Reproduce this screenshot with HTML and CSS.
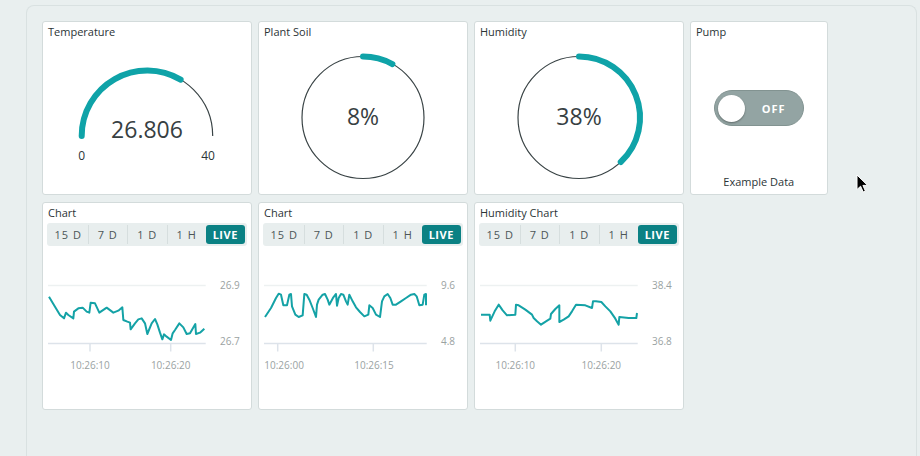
FILE: index.html
```html
<!DOCTYPE html>
<html>
<head>
<meta charset="utf-8">
<link rel="stylesheet" href="styles.css">
</head>
<body>
<div class="board">
  <div class="grid">
    <div class="card">
      <div class="title">Temperature</div>
      <svg class="widget" width="207" height="152" viewBox="0 0 207 152">
        <path class="ring" d="M38.7 95 A65.5 65.5 0 0 1 169.7 95"/>
        <path class="fillarc" d="M38.7 95 A65.5 65.5 0 0 1 137.6 38.6"/>
        <text class="gauge-value" x="104" y="96.5" text-anchor="middle">26.806</text>
        <text class="gauge-tick" x="38.8" y="119" text-anchor="middle">0</text>
        <text class="gauge-tick" x="165" y="119" text-anchor="middle">40</text>
      </svg>
    </div>
    <div class="card">
      <div class="title">Plant Soil</div>
      <svg class="widget" width="207" height="152" viewBox="0 0 207 152">
        <circle class="ring" cx="104" cy="76.5" r="61"/>
        <path class="fillarc" d="M104 15.5 A61 61 0 0 1 133.4 23.05"/>
        <text class="gauge-value" x="104" y="83.5" text-anchor="middle">8%</text>
      </svg>
    </div>
    <div class="card">
      <div class="title">Humidity</div>
      <svg class="widget" width="207" height="152" viewBox="0 0 207 152">
        <circle class="ring" cx="104" cy="76.5" r="61"/>
        <path class="fillarc" d="M104 15.5 A61 61 0 0 1 145.76 120.97"/>
        <text class="gauge-value" x="104" y="83.5" text-anchor="middle">38%</text>
      </svg>
    </div>
    <div class="card pump">
      <div class="title">Pump</div>
      <div class="pump-body">
        <div class="switch"><span class="knob"></span><span class="switch-label">OFF</span></div>
      </div>
      <div class="pump-foot">Example Data</div>
    </div>

    <div class="card">
      <div class="title">Chart</div>
      <div class="ranges">
        <span class="range">15 D</span><span class="range">7 D</span><span class="range">1 D</span><span class="range last">1 H</span><span class="range live">LIVE</span>
      </div>
      <svg class="plot" width="207" height="163" viewBox="0 0 207 163">
        <line class="grid-top" x1="5" y1="39.5" x2="162.7" y2="39.5"/>
        <line class="grid-bottom" x1="5" y1="97.5" x2="162.7" y2="97.5"/>
        <line class="tick" x1="47" y1="97.5" x2="47" y2="105.5"/>
        <line class="tick" x1="127.7" y1="97.5" x2="127.7" y2="105.5"/>
        <g transform="translate(-3 24) scale(0.33333)">
          <polyline class="series" points="27,80 45,110 60,135 72,145 78,128 85,135 100,145 102,125 115,115 128,113 140,125 148,128 152,98 165,100 178,128 200,113 220,128 235,122 247,112 250,150 262,155 270,158 272,178 285,160 295,148 305,145 315,160 322,192 335,160 345,147 352,163 360,188 367,208 372,193 380,200 393,210 398,190 405,180 418,160 430,172 440,192 450,190 466,162 468,192 480,188 493,176"/>
        </g>
        <text class="axis" x="177" y="43">26.9</text>
        <text class="axis" x="177" y="99">26.7</text>
        <text class="axis" x="47" y="123.3" text-anchor="middle">10:26:10</text>
        <text class="axis" x="127.7" y="123.3" text-anchor="middle">10:26:20</text>
      </svg>
    </div>
    <div class="card">
      <div class="title">Chart</div>
      <div class="ranges">
        <span class="range">15 D</span><span class="range">7 D</span><span class="range">1 D</span><span class="range last">1 H</span><span class="range live">LIVE</span>
      </div>
      <svg class="plot" width="207" height="163" viewBox="0 0 207 163">
        <line class="grid-top" x1="5" y1="39.5" x2="167.7" y2="39.5"/>
        <line class="grid-bottom" x1="5" y1="97.5" x2="167.7" y2="97.5"/>
        <line class="tick" x1="18.7" y1="97.5" x2="18.7" y2="105.5"/>
        <line class="tick" x1="114.3" y1="97.5" x2="114.3" y2="105.5"/>
        <g transform="translate(-3 -48) scale(0.33333)">
          <polyline class="series" points="27,357 45,330 60,300 68,287 75,290 82,322 93,322 100,290 105,288 108,325 118,350 128,357 140,352 145,288 152,290 160,305 170,330 180,357 183,320 188,305 200,290 207,288 215,305 220,320 232,298 240,288 243,323 248,300 255,288 262,290 270,310 275,320 280,290 290,310 300,328 312,342 325,355 337,350 340,322 350,330 360,350 372,357 378,310 385,295 395,288 403,300 410,320 420,320 435,310 450,300 465,290 475,288 482,295 490,322 500,320 505,290 510,288 510,322"/>
        </g>
        <text class="axis" x="182" y="43">9.6</text>
        <text class="axis" x="182" y="99">4.8</text>
        <text class="axis" x="5.3" y="123.3">10:26:00</text>
        <text class="axis" x="115" y="123.3" text-anchor="middle">10:26:15</text>
      </svg>
    </div>
    <div class="card">
      <div class="title">Humidity Chart</div>
      <div class="ranges">
        <span class="range">15 D</span><span class="range">7 D</span><span class="range">1 D</span><span class="range last">1 H</span><span class="range live">LIVE</span>
      </div>
      <svg class="plot" width="207" height="163" viewBox="0 0 207 163">
        <line class="grid-top" x1="5" y1="39.5" x2="162.7" y2="39.5"/>
        <line class="grid-bottom" x1="5" y1="97.5" x2="162.7" y2="97.5"/>
        <line class="tick" x1="40.3" y1="97.5" x2="40.3" y2="105.5"/>
        <line class="tick" x1="126.3" y1="97.5" x2="126.3" y2="105.5"/>
        <g transform="translate(-3 -48) scale(0.33333)">
          <polyline class="series" points="27,350 53,350 55,368 68,340 80,320 92,337 105,352 130,350 132,320 140,322 160,335 180,350 185,360 195,370 207,380 222,370 235,362 237,348 250,333 262,322 262,372 275,365 290,355 300,340 312,320 340,322 360,330 363,310 372,310 388,312 400,325 415,340 430,362 440,380 442,357 470,360 493,360 495,345"/>
        </g>
        <text class="axis" x="177" y="43">38.4</text>
        <text class="axis" x="177" y="99">36.8</text>
        <text class="axis" x="40.3" y="123.3" text-anchor="middle">10:26:10</text>
        <text class="axis" x="126.3" y="123.3" text-anchor="middle">10:26:20</text>
      </svg>
    </div>
  </div>
</div>
<svg class="cursor" width="14" height="20" viewBox="0 0 14 20">
  <path d="M1 1 L1 15.5 L4.6 12.2 L7.2 18 L9.4 17 L6.9 11.4 L11.6 11.4 Z" fill="#000" stroke="#fff" stroke-width="1" stroke-linejoin="round"/>
</svg>
</body>
</html>
```

FILE: styles.css
```css
html, body {
  margin: 0;
  background: #e9efef;
  font-family: "Open Sans", "Noto Sans", sans-serif;
}

body {
  position: relative;
  box-sizing: border-box;
  height: 456px;
  overflow: hidden;
  padding: 5px 3px 0 26px;
}

.board {
  border: 1px solid #d9e1e1;
  border-bottom: 0;
  border-radius: 8px 8px 0 0;
  padding: 15px;
  height: 420px;
}

.grid {
  display: grid;
  grid-template-columns: 209.5px 209.5px 209.5px 137.5px;
  grid-template-rows: 174px 208px;
  column-gap: 6.5px;
  row-gap: 7px;
}

.card {
  background: #fff;
  border: 1px solid #d3dbdb;
  border-radius: 3px;
  box-sizing: border-box;
  display: flex;
  flex-direction: column;
  overflow: hidden;
}

.title {
  font-size: 11px;
  line-height: 16px;
  height: 18px;
  box-sizing: border-box;
  padding: 2px 5px 0;
  color: #2b3436;
  white-space: nowrap;
}

.widget, .plot {
  display: block;
}

.widget {
  margin-top: 1px;
}

.ring {
  fill: none;
  stroke: #3a4446;
  stroke-width: 1.2;
}

.fillarc {
  fill: none;
  stroke: #0fa3a8;
  stroke-width: 6;
  stroke-linecap: round;
}

.gauge-value {
  font-size: 23px;
  fill: #374042;
}

.gauge-tick {
  font-size: 12px;
  fill: #2b3436;
}

/* pump */
.pump-body {
  flex: 1;
  display: flex;
  align-items: center;
  justify-content: center;
  padding-top: 2px;
}

.switch {
  width: 90px;
  height: 36px;
  box-sizing: border-box;
  border-radius: 18px;
  background: #93a4a3;
  border: 1px solid #829391;
  display: flex;
  align-items: center;
  padding-left: 3px;
}

.knob {
  width: 27px;
  height: 27px;
  border-radius: 50%;
  background: #fff;
  box-shadow: 0 1px 2px rgba(0, 0, 0, 0.35);
}

.switch-label {
  margin-left: 17px;
  color: #fff;
  font-size: 11px;
  font-weight: 700;
  letter-spacing: 1px;
}

.pump-foot {
  text-align: center;
  font-size: 11px;
  line-height: 16px;
  padding-bottom: 4px;
  color: #2b3436;
}

/* charts */
.ranges {
  display: flex;
  margin: 2px 4px 0;
  height: 23px;
  box-sizing: border-box;
  padding: 2px;
  background: #e8eeee;
  border-radius: 3px;
}

.range {
  flex: 1;
  text-align: center;
  font-size: 11px;
  line-height: 19px;
  letter-spacing: 1px;
  color: #4c5657;
  border-right: 1px solid #d6dede;
}

.range.last {
  border-right: 0;
}

.range.live {
  border-right: 0;
  background: #0b8184;
  color: #fff;
  font-weight: 700;
  border-radius: 3px;
  letter-spacing: 0.5px;
}

.grid-top {
  stroke: #edf1f1;
  stroke-width: 1.5;
}

.grid-bottom, .tick {
  stroke: #dde3ea;
  stroke-width: 1.5;
}

.series {
  fill: none;
  stroke: #14a2a6;
  stroke-width: 2;
  stroke-linejoin: round;
  vector-effect: non-scaling-stroke;
}

.axis {
  font-size: 10px;
  fill: #9aa2a2;
}

.cursor {
  position: absolute;
  left: 856px;
  top: 174px;
}
```
